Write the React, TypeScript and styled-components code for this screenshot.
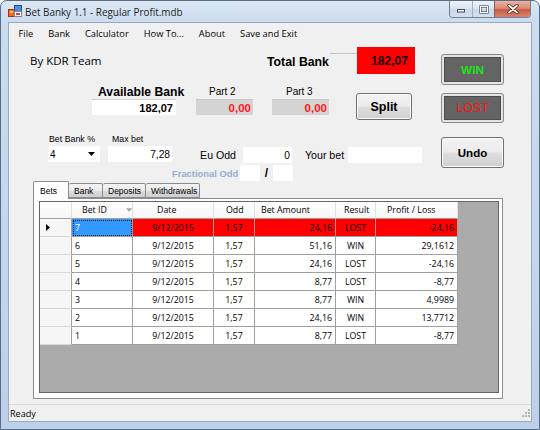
import React from 'react';
import styled, { createGlobalStyle } from 'styled-components';

const SEGOE = `"Open Sans", "Noto Sans", sans-serif`;
const MSSANS = `"Liberation Sans", Arial, sans-serif`;

const GlobalStyle = createGlobalStyle`
  html, body {
    margin: 0;
    padding: 0;
    background: #ffffff;
  }
  body {
    width: 540px;
    height: 430px;
    overflow: hidden;
  }
  * {
    box-sizing: border-box;
  }
`;

const Frame = styled.div`
  width: 540px;
  height: 430px;
  display: flex;
  flex-direction: column;
  border: 1px solid #5a6d86;
  border-radius: 7px 7px 0 0;
  background: linear-gradient(180deg, #dde8f4 0px, #cbdcef 20px, #c2d6ec 60%, #bcd1e9 100%);
  overflow: hidden;
`;

const TitleBar = styled.div`
  height: 21px;
  display: flex;
  align-items: center;
  padding-left: 7px;
`;

const Title = styled.span`
  margin-left: 3px;
  font-family: ${SEGOE};
  font-size: 9.9px;
  color: #1e1e1e;
  white-space: nowrap;
`;

const CaptionGroup = styled.div`
  margin-left: auto;
  margin-right: 8px;
  align-self: flex-start;
  display: flex;
  border: 1px solid #6f8199;
  border-top: none;
  border-radius: 0 0 4px 4px;
  overflow: hidden;
`;

const CaptionButton = styled.div<{ $w: number; $close?: boolean }>`
  width: ${p => p.$w}px;
  height: 16px;
  display: flex;
  align-items: center;
  justify-content: center;
  border-left: ${p => (p.$close ? '1px solid #8a5a55' : '1px solid #9fb0c6')};
  background: ${p =>
    p.$close
      ? 'linear-gradient(180deg, #e9b3a5 0%, #db8c78 45%, #c85c44 55%, #d9846a 100%)'
      : 'linear-gradient(180deg, #eef3f9 0%, #dde6f1 45%, #c9d7e8 55%, #d3dfed 100%)'};
  &:first-child {
    border-left: none;
  }
`;

const Client = styled.div`
  flex: 1;
  margin: 0 7px 7px 7px;
  display: flex;
  flex-direction: column;
  background: #f0f0f0;
  border: 1px solid #97abc4;
`;

const MenuBar = styled.div`
  height: 20px;
  display: flex;
  align-items: center;
  padding-left: 2px;
  font-family: ${SEGOE};
  font-size: 9.3px;
  color: #000;
`;

const MenuItem = styled.span`
  padding: 0 7.5px;
  white-space: nowrap;
`;

const Body = styled.div`
  flex: 1;
  display: flex;
  flex-direction: column;
`;

const TopArea = styled.div`
  height: 138px;
  display: flex;
`;

const LeftPane = styled.div`
  width: 432px;
  display: flex;
  flex-direction: column;
`;

const RightButtons = styled.div`
  width: 63px;
  padding-top: 11px;
  display: flex;
  flex-direction: column;
`;

const HeaderRow = styled.div`
  height: 27px;
  margin-top: 4px;
  display: flex;
  align-items: center;
`;

const ByLabel = styled.span`
  width: 258px;
  padding-left: 21px;
  font-family: ${SEGOE};
  font-size: 11.5px;
  color: #000;
  white-space: nowrap;
`;

const TotalLabel = styled.span`
  width: 63px;
  margin-top: 3px;
  font-family: ${MSSANS};
  font-weight: bold;
  font-size: 12.3px;
  color: #000;
  white-space: nowrap;
`;

const Stub = styled.div`
  width: 27px;
  align-self: flex-start;
  margin-top: 6px;
  border-top: 1px solid #c4c4c4;
`;

const TotalBox = styled.div`
  width: 58px;
  height: 27px;
  background: #ff0000;
  display: flex;
  align-items: center;
  justify-content: flex-end;
  padding-right: 7px;
  font-family: ${MSSANS};
  font-weight: bold;
  font-size: 12.1px;
  color: #110000;
`;

const BankRow = styled.div`
  height: 35px;
  margin-top: 11px;
  display: flex;
  align-items: flex-start;
  padding-left: 83px;
`;

const Field = styled.div<{ $w: number; $gap?: number }>`
  width: ${p => p.$w}px;
  margin-left: ${p => p.$gap ?? 0}px;
  display: flex;
  flex-direction: column;
`;

const FieldLabel = styled.span<{ $pad: number; $size: number; $bold?: boolean }>`
  height: 14px;
  line-height: 14px;
  padding-left: ${p => p.$pad}px;
  font-family: ${MSSANS};
  font-size: ${p => p.$size}px;
  font-weight: ${p => (p.$bold ? 'bold' : 'normal')};
  color: #000;
  white-space: nowrap;
`;

const SmallLabel = styled.span<{ $pad: number }>`
  height: 13px;
  line-height: 13px;
  padding-left: ${p => p.$pad}px;
  font-family: ${MSSANS};
  font-size: 8.8px;
  color: #000;
  white-space: nowrap;
`;

const ValueBox = styled.div<{ $grey?: boolean }>`
  height: 16px;
  display: flex;
  align-items: center;
  justify-content: flex-end;
  padding-right: ${p => (p.$grey ? 2 : 3)}px;
  background: ${p => (p.$grey ? '#d4d4d4' : '#ffffff')};
  border-top: 1px solid ${p => (p.$grey ? '#c8c8c8' : '#d0d0d0')};
  font-family: ${MSSANS};
  font-weight: bold;
  font-size: ${p => (p.$grey ? 11.5 : 11)}px;
  color: ${p => (p.$grey ? '#ff1a1a' : '#000')};
`;

const PushButton = styled.div<{ $w: number; $h: number; $size: number; $top?: number }>`
  width: ${p => p.$w}px;
  height: ${p => p.$h}px;
  margin-top: ${p => p.$top ?? 0}px;
  display: flex;
  align-items: center;
  justify-content: center;
  border: 1px solid #707070;
  border-radius: 3px;
  background: linear-gradient(180deg, #f3f3f3 0%, #ececec 48%, #dedede 52%, #d0d0d0 100%);
  box-shadow: inset 0 0 0 1px #fbfbfb;
  font-family: ${MSSANS};
  font-weight: bold;
  font-size: ${p => p.$size}px;
  color: #000;
`;

const ResultButton = styled.div<{ $h: number; $top?: number }>`
  width: 63px;
  height: ${p => p.$h}px;
  margin-top: ${p => p.$top ?? 0}px;
  padding: 2px;
  display: flex;
  border: 1px solid #8a8a8a;
  border-radius: 3px;
  background: #e4e4e4;
`;

const ResultFace = styled.span<{ $color: string; $bold?: boolean }>`
  flex: 1;
  display: flex;
  align-items: center;
  justify-content: center;
  background: #646464;
  border: 1px solid #4c4c4c;
  font-family: ${MSSANS};
  font-size: ${p => (p.$bold ? 11.8 : 12.4)}px;
  font-weight: ${p => (p.$bold ? 'bold' : 'normal')};
  color: ${p => p.$color};
`;

const BetRow = styled.div`
  margin-top: 13px;
  display: flex;
  align-items: flex-start;
  padding-left: 39px;
`;

const Combo = styled.div`
  height: 16px;
  display: flex;
  align-items: center;
  justify-content: space-between;
  padding: 0 5px 0 2px;
  background: #ffffff;
  font-family: ${MSSANS};
  font-size: 10px;
  color: #000;
`;

const InputBox = styled.div<{ $w: number; $gap?: number }>`
  width: ${p => p.$w}px;
  height: 16px;
  margin-left: ${p => p.$gap ?? 0}px;
  display: flex;
  align-items: center;
  justify-content: flex-end;
  padding-right: 2px;
  background: #ffffff;
  font-family: ${MSSANS};
  font-size: 10.2px;
  color: #000;
`;

const OddsBlock = styled.div`
  margin-top: 14px;
  display: flex;
  flex-direction: column;
  gap: 2px;
`;

const OddRow = styled.div`
  height: 16px;
  display: flex;
  align-items: center;
`;

const OddLabel = styled.span<{ $pad: number; $frac?: boolean }>`
  width: 68px;
  text-align: right;
  padding-right: ${p => p.$pad}px;
  font-family: ${MSSANS};
  font-size: ${p => (p.$frac ? 9.4 : 10.6)}px;
  font-weight: ${p => (p.$frac ? 'bold' : 'normal')};
  color: ${p => (p.$frac ? '#94add0' : '#000')};
  white-space: nowrap;
`;

const YourBetLabel = styled.span`
  width: 43px;
  margin-left: 13px;
  font-family: ${MSSANS};
  font-size: 10.6px;
  color: #000;
  white-space: nowrap;
`;

const Slash = styled.span`
  width: 13px;
  text-align: center;
  font-family: ${MSSANS};
  font-weight: bold;
  font-size: 12px;
  color: #000;
`;

const TabControl = styled.div`
  width: 470px;
  margin-left: 24px;
  display: flex;
  flex-direction: column;
`;

const TabStrip = styled.div`
  height: 17px;
  display: flex;
  align-items: flex-end;
`;

const Tab = styled.div<{ $w: number; $active?: boolean }>`
  width: ${p => p.$w}px;
  height: ${p => (p.$active ? 18 : 15)}px;
  margin-bottom: ${p => (p.$active ? -1 : 0)}px;
  padding-left: ${p => (p.$active ? 6 : 5)}px;
  display: flex;
  align-items: center;
  border: 1px solid #898c95;
  border-bottom: ${p => (p.$active ? 'none' : '1px solid #898c95')};
  border-left-width: ${p => (p.$active ? 1 : 0)}px;
  border-radius: 2px 2px 0 0;
  background: ${p => (p.$active ? '#ffffff' : 'linear-gradient(180deg, #f3f3f3 0%, #ebebeb 50%, #dddddd 50%, #cfcfcf 100%)')};
  font-family: ${MSSANS};
  font-size: 8.5px;
  color: #000;
  position: relative;
  z-index: ${p => (p.$active ? 1 : 0)};
  &:nth-child(2) {
    border-left-width: 0;
  }
`;

const TabPage = styled.div`
  height: 201px;
  padding: 2px 3px 5px 5px;
  display: flex;
  border: 1px solid #898c95;
  background: #ffffff;
`;

const DataGrid = styled.div`
  flex: 1;
  border: 1px solid #666666;
  background: #ababab;
`;

const Table = styled.div<{ $cols: string }>`
  display: grid;
  grid-template-columns: ${p => p.$cols};
  grid-template-rows: 17px;
  grid-auto-rows: 18px;
  width: max-content;
  font-family: ${SEGOE};
  font-size: 8.8px;
  color: #000;
`;

const HeadCell = styled.div<{ $pad: number }>`
  display: flex;
  align-items: center;
  padding-left: ${p => p.$pad}px;
  background: linear-gradient(180deg, #ffffff 0%, #f7f7f7 100%);
  border-right: 1px solid #e0e0e0;
  border-bottom: 1px solid #a0a0a0;
  white-space: nowrap;
`;

const RowHead = styled.div`
  display: flex;
  align-items: center;
  padding-left: 6px;
  background: #f6f6f6;
  border-right: 1px solid #a0a0a0;
  border-bottom: 1px solid #dadada;
`;

const Cell = styled.div<{ $align: 'left' | 'center' | 'right'; $bg: string; $selected?: boolean }>`
  display: flex;
  align-items: center;
  justify-content: ${p => (p.$align === 'left' ? 'flex-start' : p.$align === 'right' ? 'flex-end' : 'center')};
  padding: 0 3px;
  background: ${p => p.$bg};
  border-right: 1px solid #a0a0a0;
  border-bottom: 1px solid #a0a0a0;
  color: ${p => (p.$selected ? '#ffffff' : '#000')};
  outline: ${p => (p.$selected ? '1px dotted #1a1a1a' : 'none')};
  outline-offset: -2px;
  white-space: nowrap;
`;

const StatusBar = styled.div`
  height: 17px;
  display: flex;
  align-items: center;
  justify-content: space-between;
  padding-left: 1px;
  border-top: 1px solid #dcdcdc;
  font-family: ${SEGOE};
  font-size: 9.1px;
  color: #000;
`;

type Align = 'left' | 'center' | 'right';

const columns: { key: string; title: string; width: number; align: Align; headPad: number; sort?: boolean }[] = [
  { key: 'id', title: 'Bet ID', width: 61, align: 'left', headPad: 10, sort: true },
  { key: 'date', title: 'Date', width: 81, align: 'center', headPad: 24 },
  { key: 'odd', title: 'Odd', width: 41, align: 'center', headPad: 12 },
  { key: 'amount', title: 'Bet Amount', width: 81, align: 'right', headPad: 6 },
  { key: 'result', title: 'Result', width: 40, align: 'center', headPad: 8 },
  { key: 'profit', title: 'Profit / Loss', width: 82, align: 'right', headPad: 11 },
];

const bets = [
  { id: '7', date: '9/12/2015', odd: '1,57', amount: '24,16', result: 'LOST', profit: '-24,16' },
  { id: '6', date: '9/12/2015', odd: '1,57', amount: '51,16', result: 'WIN', profit: '29,1612' },
  { id: '5', date: '9/12/2015', odd: '1,57', amount: '24,16', result: 'LOST', profit: '-24,16' },
  { id: '4', date: '9/12/2015', odd: '1,57', amount: '8,77', result: 'LOST', profit: '-8,77' },
  { id: '3', date: '9/12/2015', odd: '1,57', amount: '8,77', result: 'WIN', profit: '4,9989' },
  { id: '2', date: '9/12/2015', odd: '1,57', amount: '24,16', result: 'WIN', profit: '13,7712' },
  { id: '1', date: '9/12/2015', odd: '1,57', amount: '8,77', result: 'LOST', profit: '-8,77' },
];

const menus = ['File', 'Bank', 'Calculator', 'How To...', 'About', 'Save and Exit'];

const tabs = [
  { label: 'Bets', width: 36, active: true },
  { label: 'Bank', width: 34 },
  { label: 'Deposits', width: 43 },
  { label: 'Withdrawals', width: 54 },
];

const AppIcon = () => (
  <svg width="14" height="13" viewBox="0 0 14 13">
    <rect x="0.5" y="4.5" width="6" height="7" fill="#f06a2a" stroke="#9a3b16" />
    <rect x="2" y="6" width="3" height="2" fill="#ffd24a" />
    <rect x="6.5" y="0.5" width="7" height="6" fill="#4f8fe0" stroke="#24508f" />
    <rect x="6.5" y="6.5" width="7" height="5" fill="#ffffff" stroke="#7b8794" />
    <rect x="8" y="8" width="4" height="2" fill="#e23b2b" />
  </svg>
);

const App = () => {
  const cols = `32px ${columns.map(c => `${c.width}px`).join(' ')}`;

  return (
    <Frame>
      <GlobalStyle />
      <TitleBar>
        <AppIcon />
        <Title>Bet Banky 1.1 - Regular Profit.mdb</Title>
        <CaptionGroup>
          <CaptionButton $w={22}>
            <svg width="10" height="8" viewBox="0 0 10 8">
              <rect x="1.5" y="4.5" width="7" height="2.5" fill="#ffffff" stroke="#3d4b5e" />
            </svg>
          </CaptionButton>
          <CaptionButton $w={22}>
            <svg width="10" height="9" viewBox="0 0 10 9">
              <rect x="1.5" y="1.5" width="7" height="6" fill="none" stroke="#3d4b5e" strokeWidth="2.2" />
              <rect x="1.5" y="1.5" width="7" height="6" fill="none" stroke="#ffffff" strokeWidth="1" />
            </svg>
          </CaptionButton>
          <CaptionButton $w={36} $close>
            <svg width="12" height="10" viewBox="0 0 12 10">
              <path d="M2 1.5 L10 8.5 M10 1.5 L2 8.5" stroke="#5a1f17" strokeWidth="3.4" strokeLinecap="round" />
              <path d="M2 1.5 L10 8.5 M10 1.5 L2 8.5" stroke="#ffffff" strokeWidth="1.8" strokeLinecap="round" />
            </svg>
          </CaptionButton>
        </CaptionGroup>
      </TitleBar>

      <Client>
        <MenuBar>
          {menus.map(m => (
            <MenuItem key={m}>{m}</MenuItem>
          ))}
        </MenuBar>

        <Body>
          <TopArea>
            <LeftPane>
              <HeaderRow>
                <ByLabel>By KDR Team</ByLabel>
                <TotalLabel>Total Bank</TotalLabel>
                <Stub />
                <TotalBox>182,07</TotalBox>
              </HeaderRow>

              <BankRow>
                <Field $w={84}>
                  <FieldLabel $pad={6} $size={12.2} $bold>Available Bank</FieldLabel>
                  <ValueBox>182,07</ValueBox>
                </Field>
                <Field $w={57} $gap={20}>
                  <FieldLabel $pad={13} $size={10}>Part 2</FieldLabel>
                  <ValueBox $grey>0,00</ValueBox>
                </Field>
                <Field $w={57} $gap={19}>
                  <FieldLabel $pad={14} $size={10}>Part 3</FieldLabel>
                  <ValueBox $grey>0,00</ValueBox>
                </Field>
                <Field $w={56} $gap={27}>
                  <PushButton $w={56} $h={27} $size={12.5} $top={8}>Split</PushButton>
                </Field>
              </BankRow>

              <BetRow>
                <Field $w={52}>
                  <SmallLabel $pad={1}>Bet Bank %</SmallLabel>
                  <Combo>
                    <span>4</span>
                    <svg width="7" height="4" viewBox="0 0 7 4">
                      <path d="M0 0 H7 L3.5 4 Z" fill="#000" />
                    </svg>
                  </Combo>
                </Field>
                <Field $w={64} $gap={8}>
                  <SmallLabel $pad={4}>Max bet</SmallLabel>
                  <InputBox $w={64}>7,28</InputBox>
                </Field>
                <OddsBlock>
                  <OddRow>
                    <OddLabel $pad={4}>Eu Odd</OddLabel>
                    <InputBox $w={49} $gap={3}>0</InputBox>
                    <YourBetLabel>Your bet</YourBetLabel>
                    <InputBox $w={74} />
                  </OddRow>
                  <OddRow>
                    <OddLabel $pad={2} $frac>Fractional Odd</OddLabel>
                    <InputBox $w={20} />
                    <Slash>/</Slash>
                    <InputBox $w={20} />
                  </OddRow>
                </OddsBlock>
              </BetRow>
            </LeftPane>

            <RightButtons>
              <ResultButton $h={31}>
                <ResultFace $color="#1ee61e" $bold>WIN</ResultFace>
              </ResultButton>
              <ResultButton $h={30} $top={8}>
                <ResultFace $color="#ff1010">LOST</ResultFace>
              </ResultButton>
              <PushButton $w={63} $h={31} $size={11.5} $top={14}>Undo</PushButton>
            </RightButtons>
          </TopArea>

          <TabControl>
            <TabStrip>
              {tabs.map(t => (
                <Tab key={t.label} $w={t.width} $active={t.active}>
                  {t.label}
                </Tab>
              ))}
            </TabStrip>
            <TabPage>
              <DataGrid>
                <Table $cols={cols}>
                  <HeadCell $pad={0} />
                  {columns.map(c => (
                    <HeadCell key={c.key} $pad={c.headPad}>
                      {c.title}
                      {c.sort && (
                        <svg width="7" height="4" viewBox="0 0 7 4" style={{ marginLeft: 19 }}>
                          <path d="M0 0 H7 L3.5 4 Z" fill="#a8a8a8" />
                        </svg>
                      )}
                    </HeadCell>
                  ))}
                  {bets.map((b, i) => (
                    <React.Fragment key={b.id}>
                      <RowHead>
                        {i === 0 && (
                          <svg width="4" height="7" viewBox="0 0 4 7">
                            <path d="M0 0 L4 3.5 L0 7 Z" fill="#000" />
                          </svg>
                        )}
                      </RowHead>
                      {columns.map(c => {
                        const selected = i === 0 && c.key === 'id';
                        const bg = selected ? '#3399ff' : i === 0 ? '#ff0000' : '#ffffff';
                        return (
                          <Cell key={c.key} $align={c.align} $bg={bg} $selected={selected}>
                            {b[c.key as keyof typeof b]}
                          </Cell>
                        );
                      })}
                    </React.Fragment>
                  ))}
                </Table>
              </DataGrid>
            </TabPage>
          </TabControl>
        </Body>

        <StatusBar>
          <span>Ready</span>
          <svg width="11" height="11" viewBox="0 0 11 11">
            {[
              [8, 1],
              [8, 4],
              [5, 4],
              [8, 7],
              [5, 7],
              [2, 7],
            ].map(([x, y]) => (
              <rect key={`${x}-${y}`} x={x} y={y} width="2" height="2" fill="#b4b4b4" />
            ))}
          </svg>
        </StatusBar>
      </Client>
    </Frame>
  );
};

export default App;
